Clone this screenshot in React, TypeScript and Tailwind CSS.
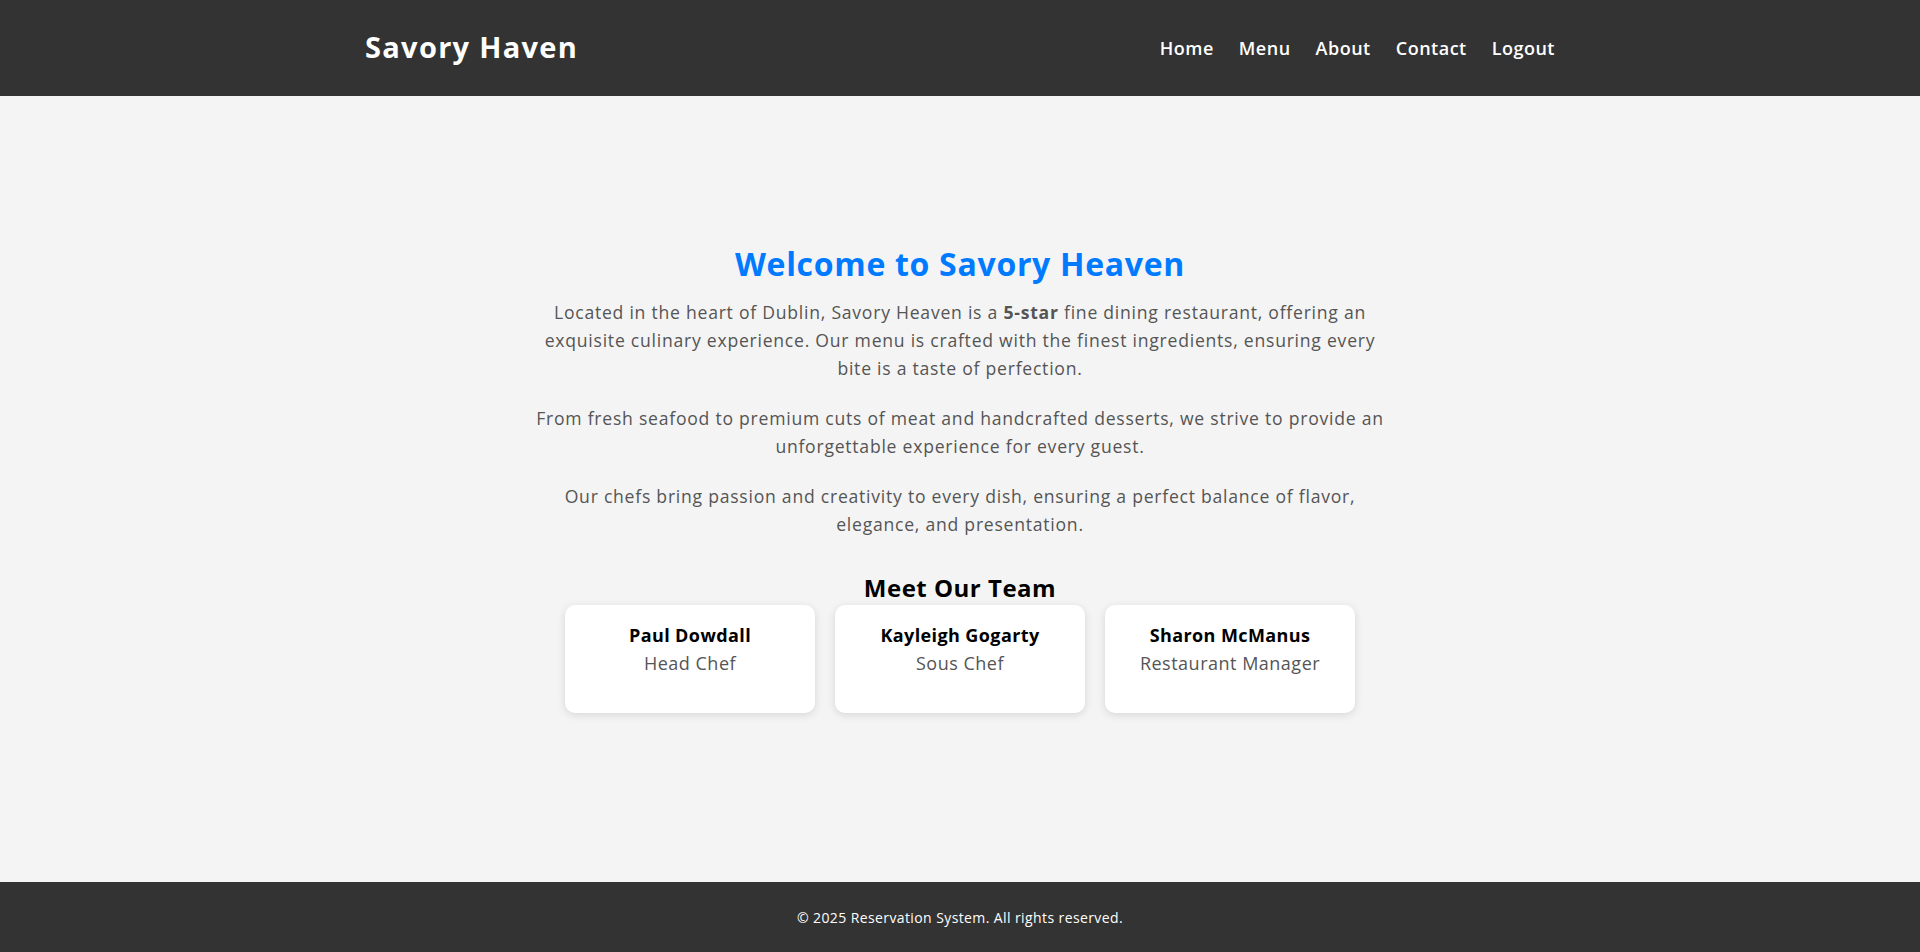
const team = [
  { name: "Paul Dowdall", role: "Head Chef" },
  { name: "Kayleigh Gogarty", role: "Sous Chef" },
  { name: "Sharon McManus", role: "Restaurant Manager" },
];

const links = ["Home", "Menu", "About", "Contact", "Logout"];

export default function App() {
  return (
    <div className="min-h-screen flex flex-col bg-[#f4f4f4] font-['Open_Sans',sans-serif]">
      {/* Header */}
      <header className="h-[96px] bg-[#333333] text-white">
        <div className="max-w-[1190px] h-full mx-auto flex items-center justify-between">
          <h1 className="text-[29px] font-bold tracking-[1.3px] pb-[2px]">Savory Haven</h1>
          <nav className="flex items-center gap-[25px] text-[18px] font-semibold tracking-[0.5px]">
            {links.map((l) => (
              <a key={l} href="#" className="text-white">
                {l}
              </a>
            ))}
          </nav>
        </div>
      </header>

      {/* Main */}
      <main className="flex-1 flex items-center justify-center">
        <section className="w-[920px] text-center pb-[21px]">
          <h2 className="text-[32px] leading-[38px] font-bold text-[#007bff] tracking-[0.7px] mb-[15px]">
            Welcome to Savory Heaven
          </h2>
          <div className="text-[17.6px] leading-[28px] text-[#555555] tracking-[0.75px]">
            <p className="mb-[22px]">
              Located in the heart of Dublin, Savory Heaven is a <strong className="font-bold">5-star</strong> fine
              dining restaurant, offering an
              <br />
              exquisite culinary experience. Our menu is crafted with the finest ingredients, ensuring every
              <br />
              bite is a taste of perfection.
            </p>
            <p className="mb-[22px]">
              From fresh seafood to premium cuts of meat and handcrafted desserts, we strive to provide an
              <br />
              unforgettable experience for every guest.
            </p>
            <p>
              Our chefs bring passion and creativity to every dish, ensuring a perfect balance of flavor,
              <br />
              elegance, and presentation.
            </p>
          </div>

          <h3 className="mt-[35px] text-[24px] leading-[29px] font-bold text-black tracking-[0.5px] mb-[3px]">
            Meet Our Team
          </h3>
          <div className="flex justify-center gap-[20px]">
            {team.map((m) => (
              <div
                key={m.name}
                className="w-[250px] h-[108px] bg-white rounded-[10px] shadow-[0_2px_8px_rgba(0,0,0,0.12)] pt-[16px]"
              >
                <div className="text-[18px] leading-[28px] font-bold text-black tracking-[0.4px]">{m.name}</div>
                <div className="text-[18px] leading-[28px] text-[#555555] tracking-[0.5px]">{m.role}</div>
              </div>
            ))}
          </div>
        </section>
      </main>

      {/* Footer */}
      <footer className="h-[70px] bg-[#333333] text-white flex items-center justify-center">
        <p className="text-[14px] tracking-[0.4px]">© 2025 Reservation System. All rights reserved.</p>
      </footer>
    </div>
  );
}
